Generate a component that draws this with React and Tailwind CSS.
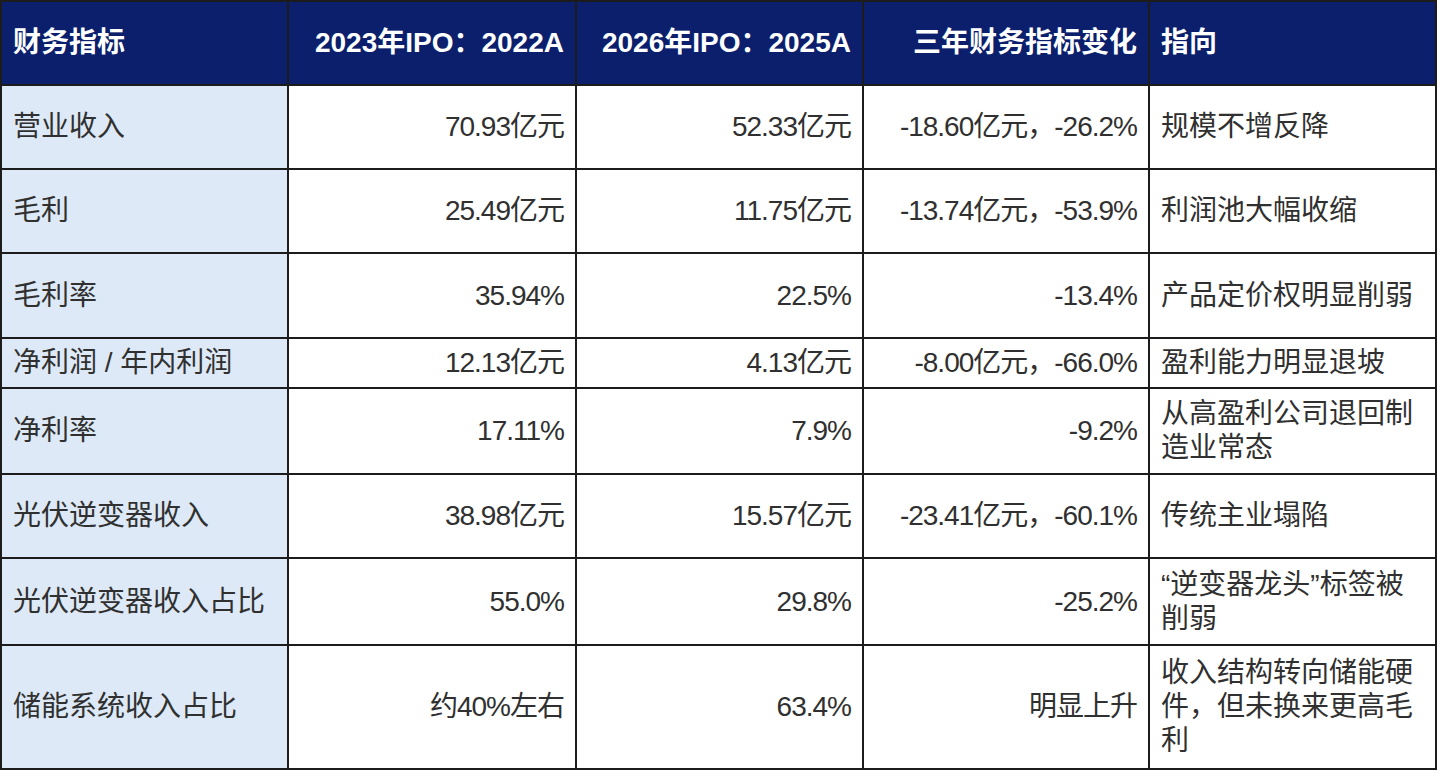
import React from 'react';

// 三年财务指标对比表
const rows = [
  { h: 'h-[84px]', name: '营业收入', a: '70.93亿元', b: '52.33亿元', c: '-18.60亿元，-26.2%', d: '规模不增反降' },
  { h: 'h-[84px]', name: '毛利', a: '25.49亿元', b: '11.75亿元', c: '-13.74亿元，-53.9%', d: '利润池大幅收缩' },
  { h: 'h-[85px]', name: '毛利率', a: '35.94%', b: '22.5%', c: '-13.4%', d: '产品定价权明显削弱' },
  { h: 'h-[50px]', name: '净利润 / 年内利润', a: '12.13亿元', b: '4.13亿元', c: '-8.00亿元，-66.0%', d: '盈利能力明显退坡' },
  { h: 'h-[86px]', name: '净利率', a: '17.11%', b: '7.9%', c: '-9.2%', d: '从高盈利公司退回制造业常态' },
  { h: 'h-[84px]', name: '光伏逆变器收入', a: '38.98亿元', b: '15.57亿元', c: '-23.41亿元，-60.1%', d: '传统主业塌陷' },
  { h: 'h-[87px]', name: '光伏逆变器收入占比', a: '55.0%', b: '29.8%', c: '-25.2%', d: '“逆变器龙头”标签被削弱' },
  { h: 'h-[124px]', name: '储能系统收入占比', a: '约40%左右', b: '63.4%', c: '明显上升', d: '收入结构转向储能硬件，但未换来更高毛利' },
];

const headers = ['财务指标', '2023年IPO：2022A', '2026年IPO：2025A', '三年财务指标变化', '指向'];

const font = { fontFamily: '"Liberation Sans", "Noto Sans CJK SC", sans-serif' };

export default function App() {
  return (
    <div className="w-[1440px] h-[776px] bg-white">
      <div className="grid grid-cols-[289px_288px_287px_286px_287px] w-[1437px] text-[28px] leading-[34px] text-[#303030]" style={font}>
        {headers.map((t, i) => (
          <div
            key={t}
            className={
              'h-[86px] flex items-center px-[11px] bg-[#0b1f6c] text-white font-semibold border-t-2 border-b-2 border-r-2 border-[#1c1c1c] whitespace-nowrap ' +
              (i === 0 ? 'border-l-2 ' : '') +
              (i >= 1 && i <= 3 ? 'justify-end' : '')
            }
          >
            {t}
          </div>
        ))}
        {rows.map((r) => (
          <React.Fragment key={r.name}>
            <div className={r.h + ' flex items-center px-[11px] bg-[#dde9f6] border-l-2 border-b-2 border-r-2 border-[#1c1c1c] whitespace-nowrap'}>
              {r.name}
            </div>
            <Num h={r.h}>{r.a}</Num>
            <Num h={r.h}>{r.b}</Num>
            <Num h={r.h}>{r.c}</Num>
            <div className={r.h + ' flex items-center px-[11px] border-b-2 border-r-2 border-[#1c1c1c]'}>
              <span>{r.d}</span>
            </div>
          </React.Fragment>
        ))}
      </div>
    </div>
  );
}

function Num({ h, children }) {
  return (
    <div className={h + ' flex items-center justify-end px-[11px] border-b-2 border-r-2 border-[#1c1c1c] whitespace-nowrap tracking-[-1px]'}>
      {children}
    </div>
  );
}
